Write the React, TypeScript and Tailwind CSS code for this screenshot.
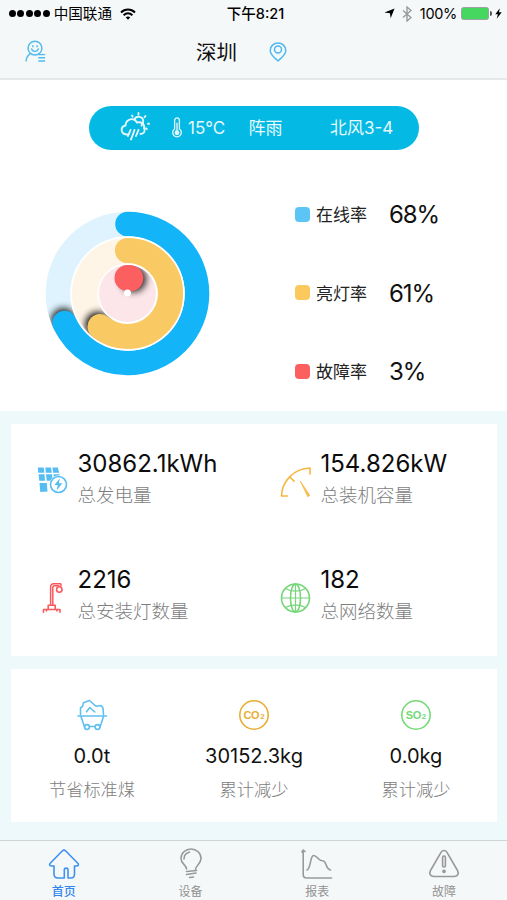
import type { ReactNode } from "react";

type RingProps = {
	radius: number;
	width: number;
	percent: number;
	color: string;
	track: string;
	shadow: number;
};

const CENTER = 83.5;

const rings: RingProps[] = [
	{ radius: 69.5, width: 24.6, percent: 68, color: "#14b5f8", track: "#def3fe", shadow: 0.85 },
	{ radius: 43, width: 25.2, percent: 61, color: "#f9c964", track: "#fff5e6", shadow: 0.95 },
	{ radius: 15.5, width: 26, percent: 3, color: "#fc5f60", track: "#fde6e9", shadow: 0.85 },
];

const rates = [
	{ label: "在线率", value: "68%", color: "bg-[#5dc5f5]" },
	{ label: "亮灯率", value: "61%", color: "bg-[#fcc95f]" },
	{ label: "故障率", value: "3%", color: "bg-[#fc5f60]" },
];

const Ring = ({ radius, width, percent, color, track, shadow }: RingProps) => {
	const angle = (percent / 100) * Math.PI * 2;
	const outer = radius + width / 2;
	const tip = angle + 3 / radius;
	const id = `track-${percent}`;

	return (
		<g>
			<clipPath id={id}>
				<circle cx={CENTER} cy={CENTER} r={outer} />
			</clipPath>
			<circle cx={CENTER} cy={CENTER} r={outer + 1.7} fill="#fff" />
			<circle cx={CENTER} cy={CENTER} r={outer} fill={track} />
			<g clipPath={`url(#${id})`}>
				<circle
					cx={CENTER + radius * Math.sin(tip)}
					cy={CENTER - radius * Math.cos(tip)}
					r={width / 2}
					fill="#000"
					opacity={shadow}
					filter="url(#soft)"
				/>
			</g>
			<circle
				cx={CENTER}
				cy={CENTER}
				r={radius}
				fill="none"
				stroke={color}
				strokeWidth={width}
				strokeLinecap="round"
				pathLength={100}
				strokeDasharray={`${percent} 100`}
				transform={`rotate(-90 ${CENTER} ${CENTER})`}
			/>
		</g>
	);
};

const Icon = ({ color, className, children }: { color: string; className?: string; children: ReactNode }) => (
	<svg
		viewBox="0 0 32 32"
		fill="none"
		stroke={color}
		strokeWidth="1.6"
		strokeLinecap="round"
		strokeLinejoin="round"
		className={className ?? "size-8"}
	>
		{children}
	</svg>
);

const SolarIcon = () => (
	<Icon color="#56bdf2">
		<g fill="#56bdf2" stroke="none">
			<path d="M.8 1.500h6l.5 5.300h-6zM8.300 1.500h5.700l.8 5.300H8.800zM15.300 1.500h5.500l1.400 5.300h-6z" />
			<path d="M1.600 8.300h5.900l.5 6.500H2.300zM9 8.300h6l.8 6.500H9.700zM16.500 8.300h6l1 6.500h-6.300z" />
			<path d="M2.500 17h7.300l.7 8.500-7.200.5z" />
		</g>
		<circle cx="21.500" cy="18.500" r="9.200" fill="#fff" stroke="none" />
		<circle cx="21.500" cy="18.500" r="8" />
		<path d="M22.800 12.300l-5.300 6.700h3.300l-1.300 5.700 5.800-7.500h-3.500z" fill="#56bdf2" stroke="none" />
	</Icon>
);

const GaugeIcon = () => (
	<Icon color="#f5b640">
		<path d="M7.500 30H1.500C1.800 15 14 2.500 30 2v6" />
		<path d="M10.300 11.500l3.800 3.600" />
		<path d="M20.500 15.500l9.300 14-1.700 1z" fill="#f5b640" strokeWidth=".8" />
	</Icon>
);

const LampIcon = () => (
	<Icon color="#f95a5c">
		<g transform="translate(5 0)">
			<path d="M8.600 22.500V5c0-2 1-3.200 3-3.200h7.200l.3 2M10.800 22.500V5.500c0-1 .5-1.700 1.500-1.700h4.500" strokeWidth="1.500" />
			<circle cx="17.300" cy="7.500" r="2.700" />
			<path d="M6.200 27.500v-4.300h7v4.300M1.500 30.300v-2.800h16.500v2.800M4.500 27.500v1.500M15 27.500v1.500" />
		</g>
	</Icon>
);

const GlobeIcon = () => (
	<Icon color="#77d57a">
		<circle cx="15.500" cy="16" r="14" />
		<ellipse cx="15.500" cy="16" rx="5" ry="14" />
		<path d="M1.500 16h28M15.500 2v28M5.500 6.500c5.500 3.500 14.500 3.500 20 0M5.500 25.500c5.500-3.500 14.500-3.500 20 0" strokeWidth="1.200" />
	</Icon>
);

const CoalIcon = () => (
	<Icon color="#5fc0f0">
		<path d="M4.500 15.500V9l2-1.500 1-3.700L13.500 1.500l5.500 5 1.700.8 4.300-.8 2 2.500.5 6.500M2 17h28.500M5 17.500L8.500 28M27.500 17.500L24 28M13.500 27.500h5M10.500 12.800l3.300-4.300 5 4.500" />
		<circle cx="11" cy="28" r="2.400" />
		<circle cx="21.500" cy="28" r="2.400" />
	</Icon>
);

const GasIcon = ({ letters, color }: { letters: string; color: string }) => (
	<div className="relative">
		<Icon color={color}>
			<circle cx="16" cy="16" r="14.200" />
		</Icon>
		<div className="absolute inset-0 flex items-center justify-center gap-px font-['Liberation_Sans',sans-serif] font-bold leading-none" style={{ color }}>
			<span className="text-[11px] tracking-[-0.4px]">{letters}</span>
			<span className="mt-[3px] text-[8px]">2</span>
		</div>
	</div>
);

const StatusBar = () => (
	<div className="flex h-[27px] items-center pl-[9px] pr-[5px] text-black">
		<div className="flex flex-1 items-center">
			<div className="flex gap-[1.8px]">
				{[0, 1, 2, 3, 4].map((dot) => (
					<span key={dot} className="size-[6.7px] rounded-full bg-black" />
				))}
			</div>
			<span className="ml-[4px] text-[14.6px] leading-5">中国联通</span>
			<svg viewBox="0 0 16 12" className="ml-2 h-[12px] w-[16px]" fill="none" stroke="#000" strokeWidth="2">
				<path d="M1 4.500c4-4 10-4 14 0M3.600 7.300c2.600-2.600 6.200-2.600 8.800 0" />
				<path d="M8 11.700L5.700 9.300c1.300-1.200 3.300-1.200 4.600 0z" fill="#000" stroke="none" />
			</svg>
		</div>
		<span className="text-[14.5px] font-medium leading-5">下午8:21</span>
		<div className="flex flex-1 items-center justify-end">
			<svg viewBox="0 0 12 12" className="size-[11px]">
				<path d="M11.500.5L7.300 11.300 6.500 5.700.5 5z" />
			</svg>
			<svg viewBox="0 0 10 16" className="ml-[7px] h-[16px] w-[10px]" fill="none" stroke="#999c9e" strokeWidth="1.400">
				<path d="M1 4.500l8 7L5 15V1l4 3.500-8 7" />
			</svg>
			<span className="ml-[8px] text-[14.5px] leading-5 tracking-[-0.3px]">100%</span>
			<span className="ml-[4px] h-[13px] w-[28px] rounded-[2.5px] border border-[#9da3a0] bg-[#45d75f]" />
			<span className="ml-px h-[5px] w-[2px] rounded-r-full bg-[#555]" />
			<svg viewBox="0 0 8 12" className="ml-[3px] h-[11px] w-[7px]">
				<path d="M5.500 0L.3 6.800h3L2 12l5.700-7.300H4.500z" />
			</svg>
		</div>
	</div>
);

const Header = () => (
	<header className="h-20 border-b-2 border-[#e5e8ea] bg-[#f5f8f9]">
		<StatusBar />
		<div className="flex h-[51px] items-center">
			<svg viewBox="0 0 20 22" className="ml-[25px] h-[23px] w-[21px] -translate-y-px" fill="none" stroke="#4fbbee" strokeWidth="1.400" strokeLinecap="round">
				<circle cx="9.500" cy="7.800" r="6.600" />
				<path d="M6.300 8.500c.8 3.200 5.400 3.200 6.400 0M7.500 5.500v1M11.500 5.500v1M5 13c-2.500 1.600-3.700 4-4 7M13.200 14h5.500M13.200 17h5.500M13.200 20h5.500" />
			</svg>
			<h1 className="ml-[150px] text-[20.5px] leading-7 text-[#111]">深圳</h1>
			<svg viewBox="0 0 18 20" className="ml-[32px] h-[20px] w-[18px] -translate-y-px" fill="none" stroke="#4fb8ee" strokeWidth="1.500">
				<path d="M9 18.800C6 16.300 1.200 12.600 1.200 8.400a7.800 7.500 0 0 1 15.600 0C16.800 12.600 12 16.300 9 18.800z" />
				<circle cx="9" cy="7.600" r="3.500" />
			</svg>
		</div>
	</header>
);

const Weather = () => (
	<div className="ml-[89px] flex h-[44px] w-[330px] items-center rounded-full bg-[#04b9e3] text-[17px] leading-6 text-[#e6f8fc]">
		<svg viewBox="0 0 30 30" className="ml-[31px] size-[30px] -translate-y-px" fill="none" stroke="#e6f8fc" strokeWidth="1.900" strokeLinecap="round">
			<path d="M8 22.500H6.500C.5 22 0 14.500 5.500 13.500 6 6.500 14 5 17 10.500c4.500-1 8 2 7 5.500 2 3.500-.5 6-3.500 6" />
			<path d="M14.500 7.500c2-4.500 9-3 8.700 2 0 2-.6 3-1.700 4M18.500 1v1.500M25.500 4l-1 1.200M28 11.800h1M26 16.300l.8.700M12 3.500l.6 1M10.500 18l-2.500 6M14.500 18l-3.500 9.500M18.500 18l-2.500 6" />
		</svg>
		<svg viewBox="0 0 12 22" className="ml-[21px] h-[21px] w-[12px] -translate-y-px" fill="none" stroke="#e6f8fc" strokeWidth="1.400">
			<path d="M3.500 12.500V3.500a2.500 2.500 0 0 1 5 0v9a4.500 4.500 0 1 1-5 0z" />
			<path d="M6 6v9" />
			<circle cx="6" cy="16.500" r="1.800" fill="#e6f8fc" />
		</svg>
		<span className="ml-[5px] w-[60.5px]">15°C</span>
		<span className="w-[81.5px]">阵雨</span>
		<span>北风3-4</span>
	</div>
);

const Rates = () => (
	<div className="flex pt-[49px]">
		<svg viewBox="0 0 168 168" className="ml-[44px] mt-[11px] size-[168px]">
			<filter id="soft" x="-50%" y="-50%" width="200%" height="200%">
				<feGaussianBlur stdDeviation="3.500" />
			</filter>
			{rings.map((ring) => (
				<Ring key={ring.percent} {...ring} />
			))}
			<circle cx={CENTER} cy={CENTER - 0.5} r="3.500" fill="#fff" />
		</svg>
		<ul className="ml-[83px] flex flex-col gap-[46.5px]">
			{rates.map(({ label, value, color }) => (
				<li key={label} className="flex h-8 items-center">
					<span className={`size-[15px] -translate-y-px rounded-[4px] ${color}`} />
					<span className="ml-[6px] w-[73px] text-[17px] leading-6 text-[#222]">{label}</span>
					<span className="text-[24px] leading-8 tracking-[-1.1px] text-[#111]">{value}</span>
				</li>
			))}
		</ul>
	</div>
);

const Stat = ({ icon, value, label }: { icon: ReactNode; value: string; label: string }) => (
	<div className="flex items-center">
		{icon}
		<div className="-mt-[6px] ml-[8.5px]">
			<p className="text-[24px] leading-[32px] text-[#0c0c0c]">{value}</p>
			<p className="text-[18.5px] font-light leading-[30px] text-[#7d7d7d]">{label}</p>
		</div>
	</div>
);

const Saving = ({ icon, value, label }: { icon: ReactNode; value: string; label: string }) => (
	<div className="flex flex-col items-center">
		{icon}
		<p className="mt-[11px] text-[20px] leading-[28px] text-[#111]">{value}</p>
		<p className="mt-[6px] text-[17.2px] font-light leading-[28px] text-[#7d7d7d]">{label}</p>
	</div>
);

const Tab = ({ label, active, children }: { label: string; active?: boolean; children: ReactNode }) => (
	<div className="flex flex-col items-center pt-[6px] pl-px">
		<Icon color={active ? "#3f91ef" : "#999"}>{children}</Icon>
		<span className={`mt-[4px] text-[12px] leading-[18px] ${active ? "font-medium text-[#2f87ee]" : "text-[#929292]"}`}>
			{label}
		</span>
	</div>
);

const App = () => {
	return (
		<div className="flex h-[900px] w-[507px] flex-col overflow-hidden bg-[#eef9fb] font-['Inter','Noto_Sans_CJK_SC',sans-serif]">
			<Header />
			<section className="h-[331px] bg-white pt-[26px]">
				<Weather />
				<Rates />
			</section>
			<section className="ml-[11px] mt-[13px] grid h-[232px] w-[486px] grid-cols-[243px_1fr] grid-rows-[116px_116px] bg-white pl-[26px]">
				<Stat icon={<SolarIcon />} value="30862.1kWh" label="总发电量" />
				<Stat icon={<GaugeIcon />} value="154.826kW" label="总装机容量" />
				<Stat icon={<LampIcon />} value="2216" label="总安装灯数量" />
				<Stat icon={<GlobeIcon />} value="182" label="总网络数量" />
			</section>
			<section className="ml-[11px] mt-[13px] grid h-[153px] w-[486px] grid-cols-3 bg-white pt-[30px]">
				<Saving icon={<CoalIcon />} value="0.0t" label="节省标准煤" />
				<Saving icon={<GasIcon letters="CO" color="#e9ad35" />} value="30152.3kg" label="累计减少" />
				<Saving icon={<GasIcon letters="SO" color="#73da78" />} value="0.0kg" label="累计减少" />
			</section>
			<nav className="mt-[18px] grid h-[60px] grid-cols-4 border-t border-[#cfd6d8] bg-[#f5f8f8]">
				<Tab label="首页" active>
					<path d="M6 19H4C1.500 19 1 17.500 2.200 16.300L14.200 4c1.200-1.100 2.400-1.100 3.600 0L29.800 16.300c1.200 1.200.7 2.700-1.300 2.700H26.500v8c0 2.500-1 4-3.500 4H20V23c0-2.500-3.700-2.500-3.700 0v8H10c-2.500 0-4-1.500-4-4z" />
				</Tab>
				<Tab label="设备">
					<path d="M11.500 22c0-4-5.500-5-5.500-10.500a10 9.500 0 0 1 20 0c0 5.500-5.500 7-5.500 11M9 12c0-3.500 2-6 5.500-7M11.500 24.500l10-1M11.500 27.500l9.500-1.500M14.500 30.500l4-.5" />
				</Tab>
				<Tab label="报表">
					<path d="M1 5l1.200-2L4 4.500M2.200 3v24.500c0 2.500 1 3.500 3.500 3.500H30.500M6 23c4-1 3-14.500 6.500-14.500S17 13 20 13.500c3 .4 3.500.3 5 4s1.500 5 4.500 5.500" />
				</Tab>
				<Tab label="故障">
					<path d="M13 5.300c1.500-2.400 4.500-2.400 6 0L29.500 23.500c1.700 3.200.3 6-3.500 6H6c-3.800 0-5.200-2.800-3.500-6z" />
					<rect x="14.600" y="9" width="2.800" height="11" rx="1.200" />
					<circle cx="16" cy="24.300" r="1.100" fill="#999" />
				</Tab>
			</nav>
		</div>
	);
};

export default App;
